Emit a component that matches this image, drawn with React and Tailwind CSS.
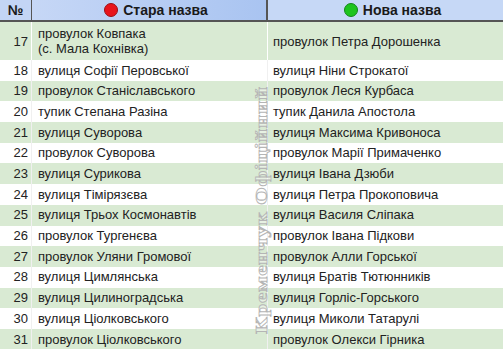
import React from "react";

const rows = [
  ["18", "вулиця Софії Перовської", "вулиця Ніни Строкатої"],
  ["19", "провулок Станіславського", "провулок Леся Курбаса"],
  ["20", "тупик Степана Разіна", "тупик Данила Апостола"],
  ["21", "вулиця Суворова", "вулиця Максима Кривоноса"],
  ["22", "провулок Суворова", "провулок Марії Примаченко"],
  ["23", "вулиця Сурикова", "вулиця Івана Дзюби"],
  ["24", "вулиця Тімірязєва", "вулиця Петра Прокоповича"],
  ["25", "вулиця Трьох Космонавтів", "вулиця Василя Сліпака"],
  ["26", "провулок Тургенєва", "провулок Івана Підкови"],
  ["27", "провулок Уляни Громової", "провулок Алли Горської"],
  ["28", "вулиця Цимлянська", "вулиця Братів Тютюнників"],
  ["29", "вулиця Цилиноградська", "вулиця Горліс-Горського"],
  ["30", "вулиця Ціолковського", "вулиця Миколи Татарулі"],
  ["31", "провулок Ціолковського", "провулок Олекси Гірника"],
];

export default function App() {
  return (
    <div
      className="relative w-[503px] h-[349px] overflow-hidden bg-white text-[13px] text-[#222]"
      style={{ fontFamily: '"Liberation Sans", Arial, sans-serif' }}
    >
      {/* header */}
      <div className="flex h-[22px] border-b-2 border-[#555] font-bold text-[14px] text-[#1a1a1a]">
        <div className="w-[32px] flex items-center justify-center bg-[#c3d5f5] border-r border-[#555]">№</div>
        <div className="w-[236px] flex items-center justify-center gap-[5px] pl-[14px] bg-[linear-gradient(to_right,#c6d7f6,#a9c4f1)] border-r-2 border-[#555]">
          <span className="w-[14px] h-[14px] rounded-full bg-[#e8141c] border border-[#9b1015]" />
          <span>Стара назва</span>
        </div>
        <div className="flex-1 flex items-center justify-center gap-[5px] pl-[14px] bg-[#c6d8f6]">
          <span className="w-[14px] h-[14px] rounded-full bg-[#1ec41e] border border-[#14861a]" />
          <span>Нова назва</span>
        </div>
      </div>
      {/* row 17 */}
      <div className="flex h-[38px] bg-[#d9ead3] leading-[15px]">
        <div className="w-[32px] flex items-center justify-end pr-[3px] border-r border-white">17</div>
        <div className="w-[236px] flex flex-col justify-center pl-[6px] border-r border-white">
          <span>провулок Ковпака</span>
          <span>(с. Мала Кохнівка)</span>
        </div>
        <div className="flex-1 flex items-center pl-[5px]">провулок Петра Дорошенка</div>
      </div>
      {rows.map(([n, a, b], i) => (
        <div
          key={n}
          className={`flex h-[20.7px] items-center ${i % 2 === 0 ? "bg-white" : "bg-[#d9ead3]"}`}
        >
          <div className="w-[32px] h-full flex items-center justify-end pr-[3px] border-r border-[#f0f0f0]">{n}</div>
          <div className="w-[236px] h-full flex items-center pl-[6px] border-r border-[#f0f0f0]">{a}</div>
          <div className="flex-1 h-full flex items-center pl-[5px]">{b}</div>
        </div>
      ))}
      {/* watermark */}
      <div
        className="absolute left-[262px] top-[210px] -translate-x-1/2 -translate-y-1/2 -rotate-90 scale-x-[1.35] whitespace-nowrap text-[17px] font-bold tracking-[0.5px] text-white/40 [-webkit-text-stroke:0.8px_#b5b5b5]"
        style={{ fontFamily: '"Liberation Serif", serif' }}
      >
        Кременчук Офіційний
      </div>
    </div>
  );
}
